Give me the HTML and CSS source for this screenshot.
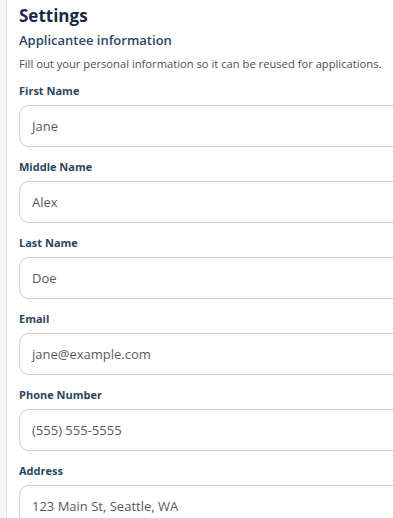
FILE: index.html
```html
<!DOCTYPE html>
<html>
<head>
<meta charset="utf-8">
<link rel="stylesheet" href="styles.css">
</head>
<body>
<div class="layout">
  <aside class="sidebar"></aside>
  <main class="content">
    <h1 class="title">Settings</h1>
    <h2 class="section">Applicantee information</h2>
    <p class="desc">Fill out your personal information so it can be reused for applications.</p>
    <div class="fields">
      <div class="field">
        <label class="label">First Name</label>
        <div class="input">Jane</div>
      </div>
      <div class="field">
        <label class="label">Middle Name</label>
        <div class="input">Alex</div>
      </div>
      <div class="field">
        <label class="label">Last Name</label>
        <div class="input">Doe</div>
      </div>
      <div class="field">
        <label class="label">Email</label>
        <div class="input">jane@example.com</div>
      </div>
      <div class="field">
        <label class="label">Phone Number</label>
        <div class="input">(555) 555-5555</div>
      </div>
      <div class="field">
        <label class="label">Address</label>
        <div class="input">123 Main St, Seattle, WA</div>
      </div>
    </div>
  </main>
</div>
</body>
</html>
```
FILE: styles.css
```css
* { box-sizing: border-box; }
html, body { margin: 0; padding: 0; background: #fff; overflow: hidden; }
body { font-family: "Open Sans", "Noto Sans", sans-serif; width: 393px; height: 518px; }
.layout { display: flex; height: 518px; overflow: hidden; }
.sidebar { width: 7px; flex: none; background: #f4f6f9; border-right: 1px solid #e3e7ec; }
.content { flex: none; width: 420px; padding: 4px 0 0 12px; }
.title { margin: 0; font-size: 17px; font-weight: 700; color: #172b45; line-height: 24px; }
.section { margin: 2px 0 0; font-size: 13px; font-weight: 600; color: #2a4765; line-height: 20px; }
.desc { margin: 6px 0 0; font-size: 11.2px; color: #4a4f57; line-height: 16px; white-space: nowrap; }
.fields { display: flex; flex-direction: column; gap: 12px; margin-top: 11px; }
.label { display: block; font-size: 11px; font-weight: 700; color: #2a4560; line-height: 16px; }
.input { margin-top: 6px; height: 42px; border: 1px solid #c9d0da; border-radius: 10px; padding: 0 12px; display: flex; align-items: center; font-size: 13px; color: #555a62; width: 400px; }
```
